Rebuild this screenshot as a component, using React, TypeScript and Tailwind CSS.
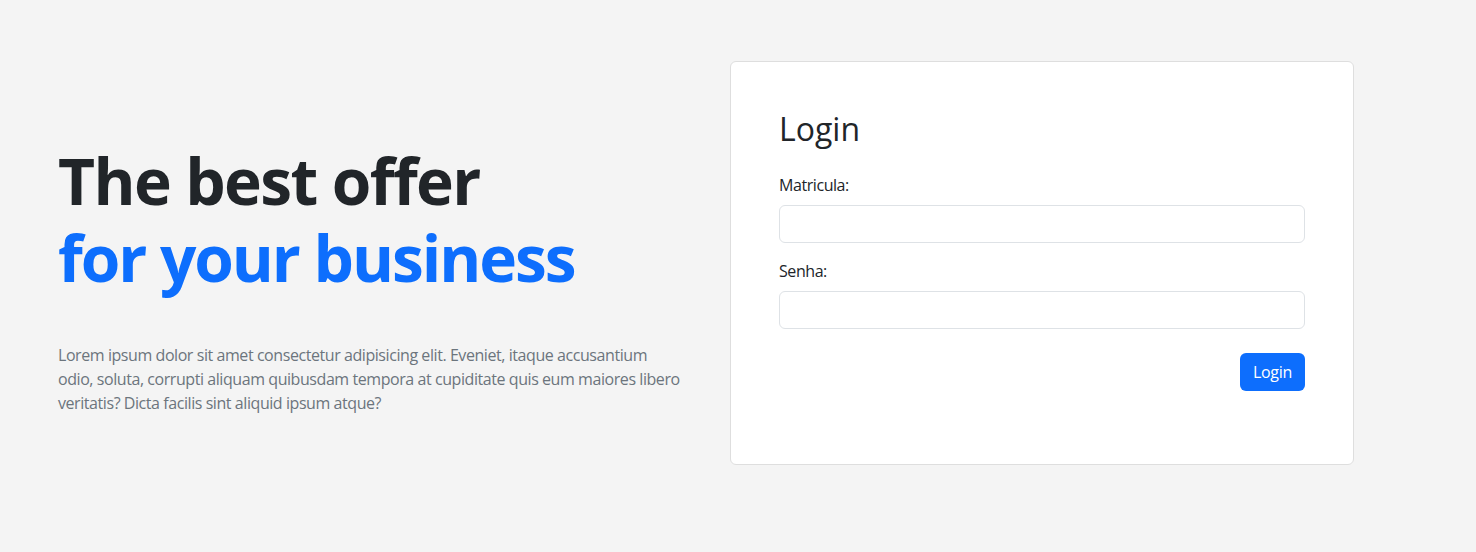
import React from 'react';

const App: React.FC = () => {
  return (
    <div className="min-h-[552px] bg-[#f4f4f4] font-['Open_Sans','Segoe_UI',sans-serif] text-[#212529]">
      <div className="flex items-start pl-[58px] pt-[61px]">
        {/* Hero text */}
        <div className="mt-[82px] w-[640px]">
          <h1 className="mb-[46px] text-[64px] font-bold leading-[1.2] tracking-[-0.025em]">
            The best offer
            <br />
            <span className="tracking-[-0.032em] text-[#0d6efd]">for your business</span>
          </h1>
          <p className="w-[626px] text-[16px] leading-[1.5] tracking-[-0.027em] text-[#6c757d]">
            Lorem ipsum dolor sit amet consectetur adipisicing elit. Eveniet, itaque accusantium odio, soluta,
            corrupti aliquam quibusdam tempora at cupiditate quis eum maiores libero veritatis? Dicta facilis sint
            aliquid ipsum atque?
          </p>
        </div>

        {/* Login card */}
        <div className="ml-[32px] w-[624px] rounded-md border border-[#dedede] bg-white p-[48px]">
          <h2 className="mb-[25px] text-[32px] font-medium leading-[1.2]">Login</h2>
          <form className="mb-[25px]" onSubmit={(e) => e.preventDefault()}>
            <div className="mb-[16px]">
              <label className="mb-[8px] block text-[16px] leading-[1.5] tracking-[-0.027em]">Matricula:</label>
              <input
                type="text"
                className="block h-[38px] w-full rounded-md border border-[#dee2e6] bg-white px-3 py-1.5 text-[16px] outline-none"
              />
            </div>
            <div className="mb-[24px]">
              <label className="mb-[8px] block text-[16px] leading-[1.5] tracking-[-0.027em]">Senha:</label>
              <input
                type="password"
                className="block h-[38px] w-full rounded-md border border-[#dee2e6] bg-white px-3 py-1.5 text-[16px] outline-none"
              />
            </div>
            <div className="flex justify-end">
              <button
                type="submit"
                className="h-[38px] w-[65px] rounded-md bg-[#0d6efd] text-[16px] leading-[1.5] tracking-[-0.02em] text-white"
              >
                Login
              </button>
            </div>
          </form>
        </div>
      </div>
    </div>
  );
};

export default App;
